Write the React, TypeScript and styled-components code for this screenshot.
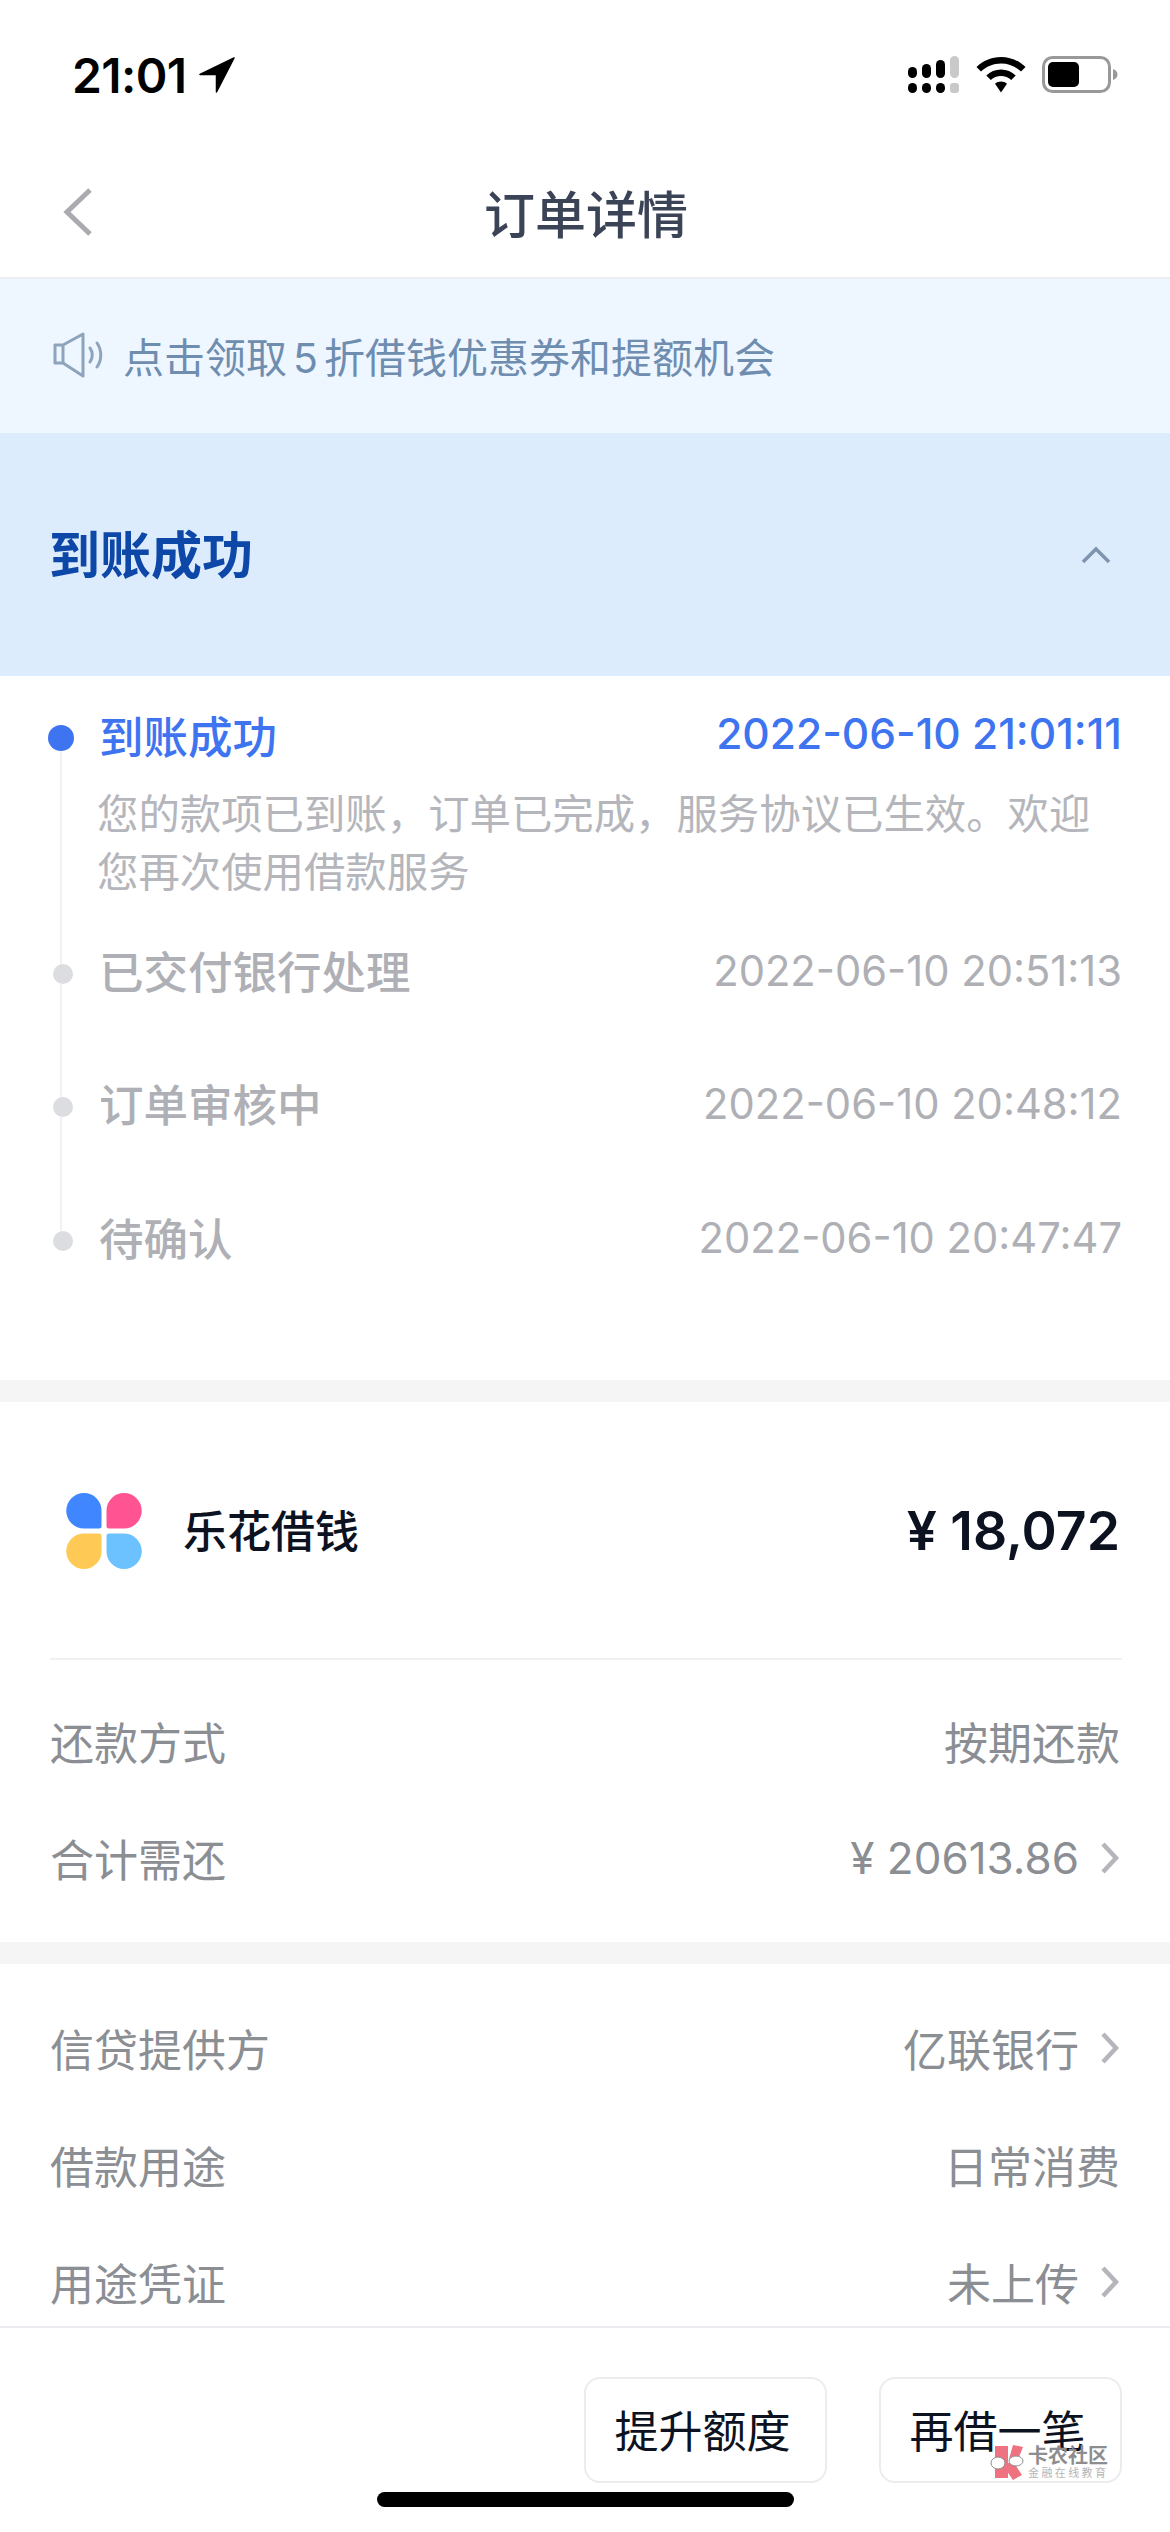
import styled, { createGlobalStyle } from 'styled-components';

const GlobalStyle = createGlobalStyle`
    html, body {
        margin: 0;
        padding: 0;
        background: #FFFFFF;
    }
    * {
        box-sizing: border-box;
    }
`;

const Page = styled.div`
    position: relative;
    display: flex;
    flex-direction: column;
    width: 1170px;
    height: 2532px;
    overflow: hidden;
    background: #FFFFFF;
    font-family: Inter, "Noto Sans CJK SC", "Liberation Sans", sans-serif;
`;

const StatusBar = styled.div`
    display: flex;
    align-items: center;
    justify-content: space-between;
    height: 150px;
    padding: 0 52px 0 72px;
`;

const StatusTime = styled.div`
    display: flex;
    align-items: center;
    gap: 13px;
    font-size: 48px;
    font-weight: 600;
    letter-spacing: -0.6px;
    color: #000000;
`;

const StatusIcons = styled.div`
    display: flex;
    align-items: center;
    gap: 16px;
`;

const NavBar = styled.div`
    display: flex;
    align-items: center;
    justify-content: center;
    position: relative;
    height: 129px;
    padding: 0 0 4px 2px;
    border-bottom: 2px solid #EBEDF0;
`;

const BackButton = styled.svg`
    position: absolute;
    left: 62px;
    top: 37px;
`;

const NavTitle = styled.div`
    font-size: 51px;
    font-weight: 500;
    color: #3B4356;
`;

const Notice = styled.div`
    display: flex;
    align-items: center;
    gap: 16px;
    height: 154px;
    padding: 0 0 2px 53px;
    background: #EEF6FF;
    font-size: 41px;
    color: #6E8DAF;
`;

const NoticeNum = styled.span`
    margin: 0 6px;
`;

const StatusBanner = styled.div`
    display: flex;
    align-items: center;
    justify-content: space-between;
    height: 243px;
    padding: 0 58px 0 49px;
    background: #DCECFD;
`;

const BannerTitle = styled.div`
    padding-bottom: 5px;
    font-size: 51px;
    font-weight: 700;
    color: #0D47A8;
`;

const Timeline = styled.div`
    display: flex;
    flex-direction: column;
    padding: 34px 48px 116px;
`;

const Step = styled.div<{ $height: number }>`
    display: flex;
    gap: 26px;
    height: ${(p) => p.$height}px;
`;

const Rail = styled.div`
    display: flex;
    flex-direction: column;
    align-items: center;
    flex: none;
    width: 26px;
`;

const Dot = styled.div<{ $active?: boolean }>`
    flex: none;
    width: ${(p) => (p.$active ? 26 : 20)}px;
    height: ${(p) => (p.$active ? 26 : 20)}px;
    margin: ${(p) => (p.$active ? '15px 0 0' : '19px 0 0 4px')};
    border-radius: 50%;
    background: ${(p) => (p.$active ? '#3F74F0' : '#DCDDE0')};
`;

const RailLine = styled.div`
    flex: 1;
    width: 2px;
    margin-bottom: -19px;
    background: #F0F1F3;
`;

const StepBody = styled.div`
    flex: 1;
    min-width: 0;
`;

const StepHead = styled.div<{ $active?: boolean }>`
    display: flex;
    align-items: center;
    justify-content: space-between;
    height: 52px;
    margin-left: -1px;
    padding-bottom: 4px;
    font-size: 44.5px;
    font-weight: 500;
    color: ${(p) => (p.$active ? '#3F74F0' : '#AEB0B5')};
`;

const StepTime = styled.div<{ $active?: boolean }>`
    font-size: ${(p) => (p.$active ? 42.5 : 41.7)}px;
    font-weight: ${(p) => (p.$active ? 500 : 400)};
    margin-top: ${(p) => (p.$active ? -2 : 3)}px;
`;

const StepDesc = styled.div`
    margin: 23px 0 0 -3px;
    width: 1010px;
    font-size: 41.4px;
    line-height: 58px;
    color: #B4B6BB;
`;

const Gap = styled.div`
    flex: none;
    height: 22px;
    background: #F5F5F6;
`;

const Product = styled.div`
    display: flex;
    align-items: center;
    justify-content: space-between;
    height: 258px;
    margin: 0 48px 0 50px;
    padding: 0 2px 2px 16px;
    border-bottom: 2px solid #EFF0F2;
`;

const ProductName = styled.div`
    display: flex;
    align-items: center;
    gap: 41px;
    font-size: 44px;
    font-weight: 500;
    color: #0C1220;
`;

const ProductLogo = styled.svg`
    margin-top: 3px;
`;

const Amount = styled.div`
    margin-top: 2px;
    font-size: 53.5px;
    font-weight: 600;
    color: #0C1220;
`;

const Rows = styled.div<{ $top: number; $bottom: number }>`
    padding: ${(p) => p.$top}px 50px ${(p) => p.$bottom}px 50px;
`;

const Row = styled.div`
    display: flex;
    align-items: center;
    justify-content: space-between;
    height: 117px;
    padding-bottom: 3px;
    font-size: 44px;
    color: #8B8E93;
`;

const RowValue = styled.div`
    display: flex;
    align-items: center;
    gap: 19px;
`;

const Content = styled.div`
    flex: 1;
    min-height: 0;
    overflow: hidden;
`;

const Footer = styled.div`
    display: flex;
    justify-content: flex-end;
    gap: 52px;
    flex: none;
    height: 206px;
    padding: 49px 48px 0 0;
    border-top: 2px solid #EBEDF0;
    background: #FFFFFF;
`;

const FooterButton = styled.div`
    display: flex;
    align-items: center;
    justify-content: center;
    width: 243px;
    height: 106px;
    padding: 0 6px 3px 0;
    border: 2px solid #EBECEE;
    border-radius: 16px;
    font-size: 44px;
    color: #0C1220;
`;

const HomeBar = styled.div`
    position: absolute;
    left: 377px;
    bottom: 25px;
    width: 417px;
    height: 15px;
    border-radius: 8px;
    background: #000000;
`;

const Watermark = styled.div`
    position: absolute;
    left: 990px;
    top: 2445px;
    display: flex;
    gap: 4px;
`;

const WatermarkText = styled.div`
    display: flex;
    flex-direction: column;
    padding-top: 1px;
`;

const WatermarkName = styled.div`
    font-size: 20px;
    line-height: 21px;
    font-weight: 700;
    color: #8D8D8F;
`;

const WatermarkSub = styled.div`
    font-size: 11px;
    line-height: 13px;
    letter-spacing: 2.4px;
    color: #B5B5B5;
`;

const Chevron = () => (
    <svg width="22" height="34" viewBox="0 0 22 34" fill="none">
        <path d="M5 3l13 14L5 31" stroke="#B4B6BB" strokeWidth="4.5" />
    </svg>
);

const steps = [
    { title: '已交付银行处理', time: '2022-06-10 20:51:13', height: 133 },
    { title: '订单审核中', time: '2022-06-10 20:48:12', height: 134 },
];

const App = () => (
    <Page>
        <GlobalStyle />
        <StatusBar>
            <StatusTime>
                21:01
                <svg width="36" height="36" viewBox="0 0 36 36">
                    <path d="M35 1L1 17.5h16.5V35z" fill="#000" stroke="#000" strokeWidth="1.5" strokeLinejoin="round" />
                </svg>
            </StatusTime>
            <StatusIcons>
                <svg width="52" height="38" viewBox="0 0 52 38">
                    <rect x="0" y="11" width="9" height="11" rx="4.5" fill="#000" />
                    <rect x="14" y="8" width="9" height="14" rx="4.5" fill="#000" />
                    <rect x="28" y="4" width="9" height="18" rx="4.5" fill="#000" />
                    <rect x="42" y="0" width="9" height="22" rx="4.5" fill="#C9C9C9" />
                    <rect x="0" y="27" width="9" height="10" rx="4.5" fill="#000" />
                    <rect x="14" y="27" width="9" height="10" rx="4.5" fill="#000" />
                    <rect x="28" y="27" width="9" height="10" rx="4.5" fill="#000" />
                    <rect x="42" y="27" width="9" height="10" rx="3" fill="#C9C9C9" />
                </svg>
                <svg width="50" height="36" viewBox="0 0 50 36">
                    <path d="M25 0C15.5 0 7 3.7 0.5 10L5 14.5C10.2 9.500 17.300 6.500 25 6.500S39.800 9.500 45 14.500L49.500 10C43 3.700 34.500 0 25 0Z" fill="#000" />
                    <path d="M25 12.500C19.300 12.500 14.200 14.700 10.300 18.500L14.800 23C17.500 20.500 21.100 19 25 19S32.500 20.500 35.200 23L39.700 18.500C35.800 14.700 30.700 12.500 25 12.500Z" fill="#000" />
                    <path d="M25 24.500C22.700 24.500 20.600 25.400 19 26.800L25 35.500L31 26.800C29.400 25.400 27.300 24.500 25 24.500Z" fill="#000" />
                </svg>
                <svg width="76" height="38" viewBox="0 0 76 38">
                    <rect x="1.500" y="1.500" width="66" height="34" rx="9" fill="none" stroke="#999" strokeWidth="3" />
                    <rect x="6" y="6" width="31" height="25" rx="5" fill="#000" />
                    <path d="M71 13c3 1 4.500 3 4.500 5.500S74 23 71 24z" fill="#999" />
                </svg>
            </StatusIcons>
        </StatusBar>
        <NavBar>
            <BackButton width="32" height="50" viewBox="0 0 32 50" fill="none">
                <path d="M28 3L5 25l23 22" stroke="#A9ABB0" strokeWidth="5" />
            </BackButton>
            <NavTitle>订单详情</NavTitle>
        </NavBar>
        <Content>
            <Notice>
                <svg width="54" height="46" viewBox="0 0 54 46" fill="none" stroke="#8EA3BC" strokeWidth="3">
                    <path d="M10 13H2v18h8M10 13L30 2v42L10 31z" strokeLinejoin="round" />
                    <path d="M37 16c3 4 3 10 0 14" strokeLinecap="round" />
                    <path d="M44 11c5 7 5 17 0 24" strokeLinecap="round" />
                </svg>
                <div>
                    点击领取<NoticeNum>5</NoticeNum>折借钱优惠券和提额机会
                </div>
            </Notice>
            <StatusBanner>
                <BannerTitle>到账成功</BannerTitle>
                <svg width="32" height="20" viewBox="0 0 32 20" fill="none">
                    <path d="M3 17L16 4l13 13" stroke="#7F95AE" strokeWidth="3.500" />
                </svg>
            </StatusBanner>
            <Timeline>
                <Step $height={235}>
                    <Rail>
                        <Dot $active />
                        <RailLine />
                    </Rail>
                    <StepBody>
                        <StepHead $active>
                            到账成功
                            <StepTime $active>2022-06-10 21:01:11</StepTime>
                        </StepHead>
                        <StepDesc>您的款项已到账，订单已完成，服务协议已生效。欢迎您再次使用借款服务</StepDesc>
                    </StepBody>
                </Step>
                {steps.map((step) => (
                    <Step key={step.title} $height={step.height}>
                        <Rail>
                            <Dot />
                            <RailLine />
                        </Rail>
                        <StepBody>
                            <StepHead>
                                {step.title}
                                <StepTime>{step.time}</StepTime>
                            </StepHead>
                        </StepBody>
                    </Step>
                ))}
                <Step $height={52}>
                    <Rail>
                        <Dot />
                    </Rail>
                    <StepBody>
                        <StepHead>
                            待确认
                            <StepTime>2022-06-10 20:47:47</StepTime>
                        </StepHead>
                    </StepBody>
                </Step>
            </Timeline>
            <Gap />
            <Product>
                <ProductName>
                    <ProductLogo width="76" height="76" viewBox="0 0 76 76">
                        <path d="M18 0a17.500 17.500 0 0 1 17.500 17.500V33a2.500 2.500 0 0 1-2.500 2.500H18a17.750 17.750 0 0 1 0-35.500z" fill="#3F86FF" />
                        <path d="M58 0a17.500 17.500 0 0 0-17.500 17.500V33a2.500 2.500 0 0 0 2.500 2.500H58a17.750 17.750 0 0 0 0-35.500z" fill="#FF5392" />
                        <path d="M18 76a17.500 17.500 0 0 0 17.500-17.500V43a2.500 2.500 0 0 0-2.500-2.500H18a17.750 17.750 0 0 0 0 35.500z" fill="#FFC955" />
                        <path d="M58 76a17.500 17.500 0 0 1-17.500-17.500V43a2.500 2.500 0 0 1 2.500-2.500H58a17.750 17.750 0 0 1 0 35.500z" fill="#6CC2FF" />
                    </ProductLogo>
                    乐花借钱
                </ProductName>
                <Amount>¥ 18,072</Amount>
            </Product>
            <Rows $top={24} $bottom={24}>
                <Row>
                    还款方式
                    <RowValue>按期还款</RowValue>
                </Row>
                <Row>
                    合计需还
                    <RowValue>
                        ¥ 20613.86
                        <Chevron />
                    </RowValue>
                </Row>
            </Rows>
            <Gap />
            <Rows $top={27} $bottom={0}>
                <Row>
                    信贷提供方
                    <RowValue>
                        亿联银行
                        <Chevron />
                    </RowValue>
                </Row>
                <Row>
                    借款用途
                    <RowValue>日常消费</RowValue>
                </Row>
                <Row>
                    用途凭证
                    <RowValue>
                        未上传
                        <Chevron />
                    </RowValue>
                </Row>
            </Rows>
        </Content>
        <Footer>
            <FooterButton>提升额度</FooterButton>
            <FooterButton>再借一笔</FooterButton>
        </Footer>
        <HomeBar />
        <Watermark>
            <svg width="34" height="36" viewBox="0 0 34 36">
                <path d="M5 1h13v32H5zM19 14L23 0l10 2-6 15zM16 18h8l8 12-9 5-7-10z" fill="#EE7280" />
                <ellipse cx="8" cy="18" rx="7" ry="6" fill="#FFF" stroke="#8D8D8F" strokeWidth="1" />
                <ellipse cx="26" cy="16" rx="7" ry="5" fill="#FFF" stroke="#8D8D8F" strokeWidth="1" />
            </svg>
            <WatermarkText>
                <WatermarkName>卡农社区</WatermarkName>
                <WatermarkSub>金融在线教育</WatermarkSub>
            </WatermarkText>
        </Watermark>
    </Page>
);

export default App;
